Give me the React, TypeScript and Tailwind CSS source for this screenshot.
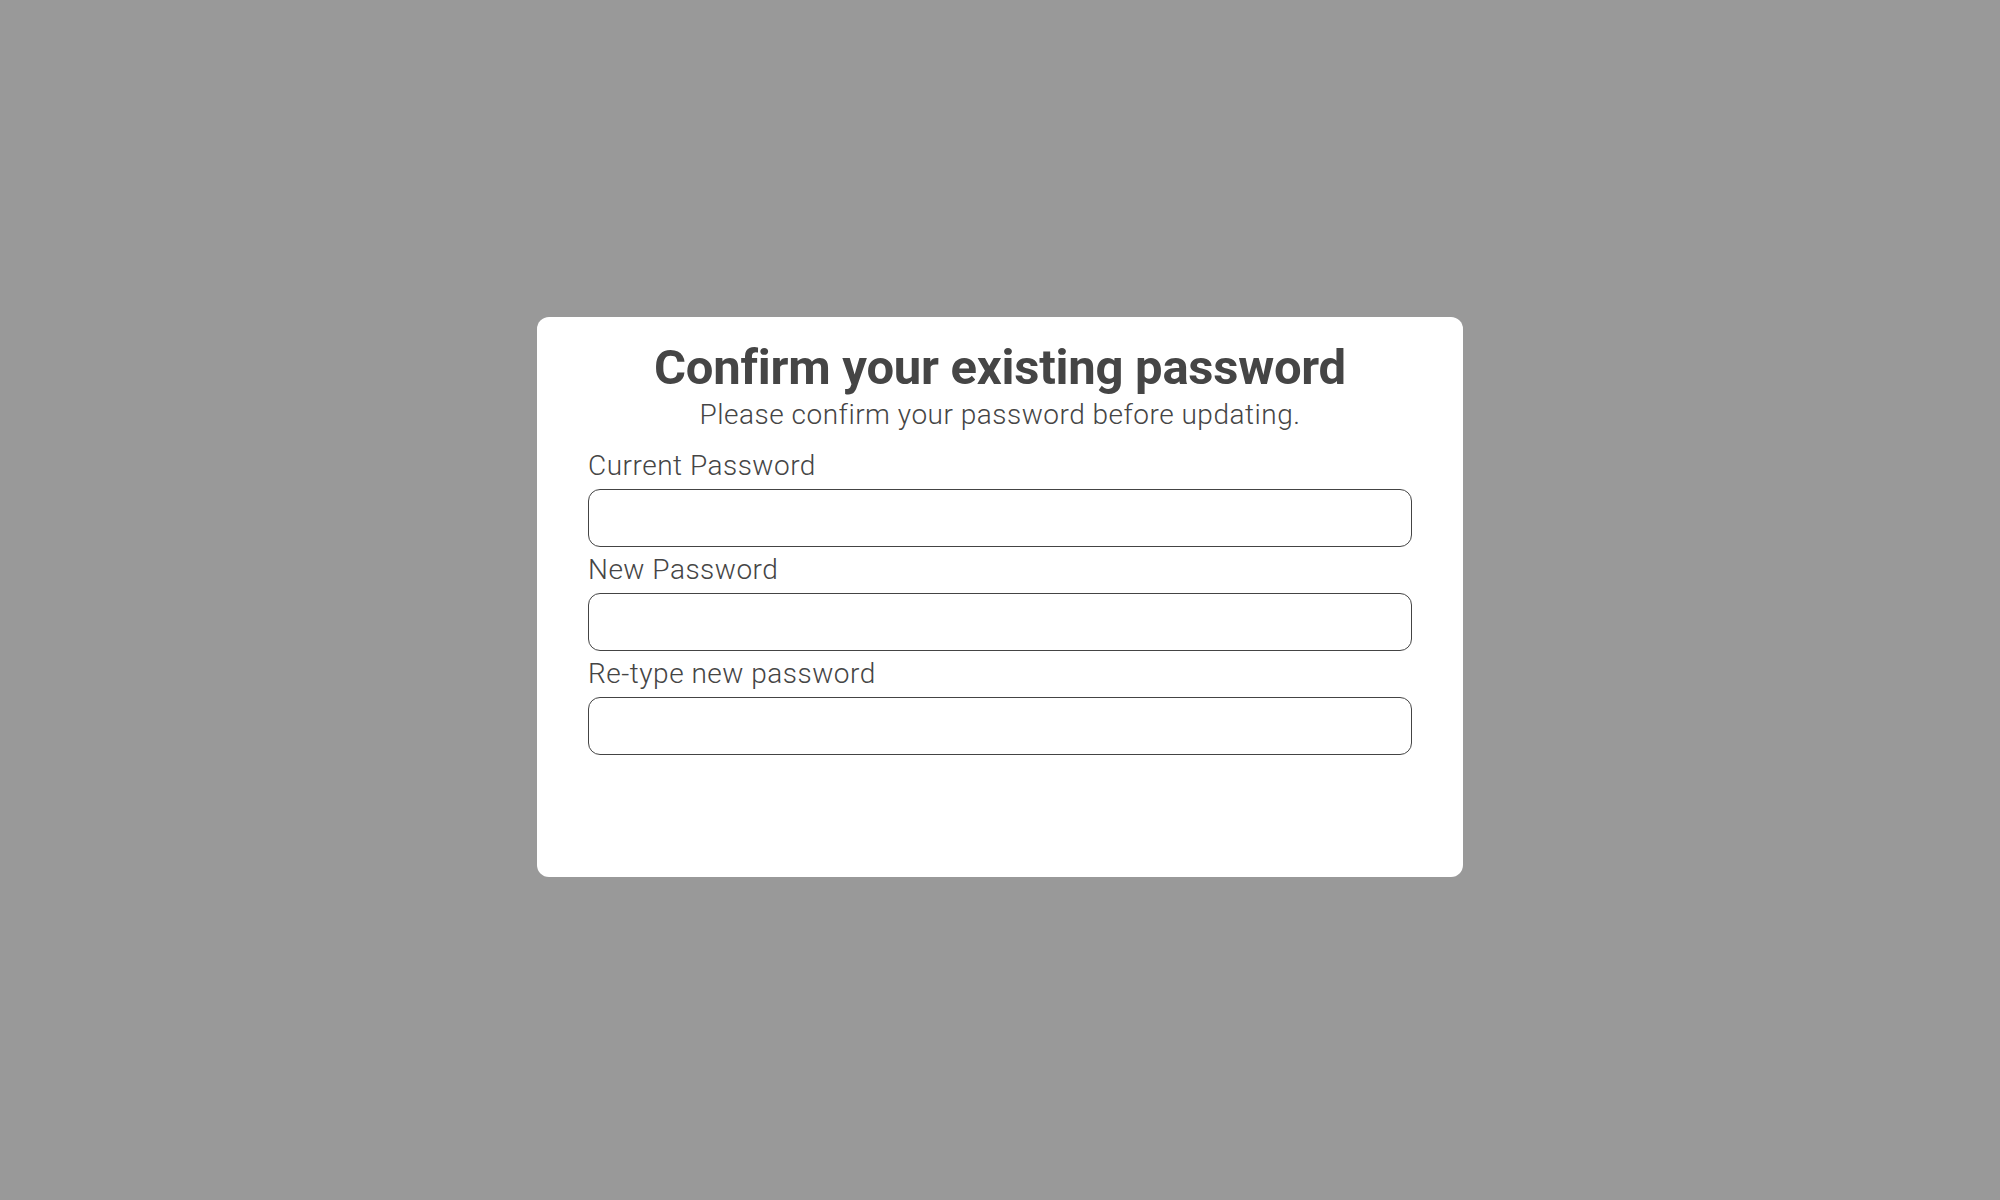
import React, { useState } from 'react';

const Field: React.FC<{ label: string; value: string; onChange: (v: string) => void }> = ({
  label,
  value,
  onChange,
}) => (
  <div className="flex flex-col gap-[6px]">
    <label className="block text-[28px] leading-[34px] font-light tracking-[0.5px] text-[#454545]">{label}</label>
    <input
      type="password"
      className="w-full h-[58px] px-4 border border-[#444444] rounded-[12px] bg-white text-[24px] outline-none"
      value={value}
      onChange={(e) => onChange(e.target.value)}
    />
  </div>
);

const App: React.FC = () => {
  const [current, setCurrent] = useState<string>('');
  const [next, setNext] = useState<string>('');
  const [retype, setRetype] = useState<string>('');

  return (
    <div className="min-h-screen w-full bg-[#999999] flex justify-center pt-[317px] font-['Roboto',sans-serif]">
      <div className="w-[926px] h-[560px] bg-white rounded-[12px] px-[51px] pt-[22px]">
        <h2 className="text-[49px] leading-[58px] font-bold text-center text-[#454545] tracking-[-0.25px]">
          Confirm your existing password
        </h2>
        <p className="mt-[1px] text-[28px] leading-[34px] font-light tracking-[0.5px] text-center text-[#454545]">
          Please confirm your password before updating.
        </p>
        <form className="mt-[17px] flex flex-col gap-[6px]" onSubmit={(e) => e.preventDefault()}>
          <Field label="Current Password" value={current} onChange={setCurrent} />
          <Field label="New Password" value={next} onChange={setNext} />
          <Field label="Re-type new password" value={retype} onChange={setRetype} />
        </form>
      </div>
    </div>
  );
};

export default App;
